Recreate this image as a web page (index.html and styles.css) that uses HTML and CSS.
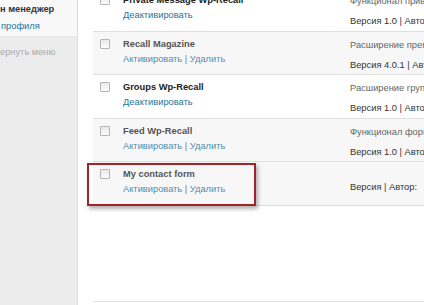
FILE: index.html
```html
<!DOCTYPE html>
<html lang="ru">
<head>
<meta charset="utf-8">
<link rel="stylesheet" href="styles.css">
</head>
<body>
<div class="page">
  <aside class="sidebar">
    <div class="side-top">
      <div class="side-title">н менеджер</div>
      <a class="side-link">профиля</a>
    </div>
    <div class="side-bottom">
      <div class="side-collapse">ернуть меню</div>
    </div>
  </aside>
  <main class="main">
    <div class="plugins">
      <div class="row active">
        <div class="cb-cell"><span class="cb"></span></div>
        <div class="name-cell">
          <div class="title">Private Message Wp-Recall</div>
          <div class="actions"><a>Деактивировать</a></div>
        </div>
        <div class="desc-cell">
          <div class="desc">Функционал приватных сообщений</div>
          <div class="ver">Версия 1.0 | Автор</div>
        </div>
      </div>
      <div class="row inactive">
        <div class="cb-cell"><span class="cb"></span></div>
        <div class="name-cell">
          <div class="title">Recall Magazine</div>
          <div class="actions"><a>Активировать</a> <span class="sep">|</span> <a>Удалить</a></div>
        </div>
        <div class="desc-cell">
          <div class="desc">Расширение премиум</div>
          <div class="ver">Версия 4.0.1 | Автор</div>
        </div>
      </div>
      <div class="row active">
        <div class="cb-cell"><span class="cb"></span></div>
        <div class="name-cell">
          <div class="title">Groups Wp-Recall</div>
          <div class="actions"><a>Деактивировать</a></div>
        </div>
        <div class="desc-cell">
          <div class="desc">Расширение групп</div>
          <div class="ver">Версия 1.0 | Автор</div>
        </div>
      </div>
      <div class="row inactive">
        <div class="cb-cell"><span class="cb"></span></div>
        <div class="name-cell">
          <div class="title">Feed Wp-Recall</div>
          <div class="actions"><a>Активировать</a> <span class="sep">|</span> <a>Удалить</a></div>
        </div>
        <div class="desc-cell">
          <div class="desc">Функционал формирования</div>
          <div class="ver">Версия 1.0 | Автор</div>
        </div>
      </div>
      <div class="row inactive highlighted">
        <div class="cb-cell"><span class="cb"></span></div>
        <div class="name-cell">
          <div class="title">My contact form</div>
          <div class="actions"><a>Активировать</a> <span class="sep">|</span> <a>Удалить</a></div>
        </div>
        <div class="desc-cell no-desc">
          <div class="ver">Версия | Автор:</div>
        </div>
        <div class="mark"></div>
      </div>
    </div>
    <div class="footer-line"></div>
  </main>
</div>
</body>
</html>
```

FILE: styles.css
```css
* { box-sizing: border-box; }
html, body {
  margin: 0;
  padding: 0;
  background: #fff;
  overflow: hidden;
}
body {
  font-family: "Liberation Sans", Arial, sans-serif;
  font-size: 9.3px;
  color: #333;
  width: 424px;
  height: 305px;
}
.page {
  display: flex;
  height: 305px;
}
.sidebar {
  width: 78px;
  flex: none;
  display: flex;
  flex-direction: column;
  border-right: 1px solid #dcdcdc;
  background: #ececec;
}
.side-top {
  height: 37px;
  background: #f8f8f8;
  border-bottom: 1px solid #e4e4e4;
  padding-top: 3px;
}
.side-title {
  font-weight: bold;
  color: #333;
  line-height: 13px;
  white-space: nowrap;
}
.side-link {
  display: block;
  color: #21759b;
  line-height: 13px;
  margin-top: 4px;
  padding-left: 1px;
  white-space: nowrap;
}
.side-bottom {
  flex: 1;
  padding-top: 9px;
}
.side-collapse {
  color: #aaa;
  line-height: 13px;
  white-space: nowrap;
}
.main {
  flex: 1;
  min-width: 0;
  padding-left: 15px;
  display: flex;
  flex-direction: column;
}
.plugins {
  margin-top: -12px;
}
.row {
  position: relative;
  display: grid;
  grid-template-columns: 30px 227px 1fr;
  height: 43.5px;
  border-bottom: 1px solid #dfdfdf;
  white-space: nowrap;
  overflow: visible;
}
.row.active { background: #fff; }
.row.inactive { background: #f7f7f7; }
.cb-cell {
  padding: 7px 0 0 7px;
}
.cb {
  display: block;
  width: 10px;
  height: 10px;
  border: 1px solid #b4b4b4;
  background: linear-gradient(#eaeaea, #fbfbfb);
  border-radius: 1px;
}
.name-cell {
  padding-top: 5px;
  line-height: 15px;
  overflow: hidden;
}
.title {
  font-weight: bold;
}
.active .title { color: #222; }
.inactive .title { color: #555; }
.actions a { color: #21759b; }
.inactive .actions a { color: #4f8eaf; }
.sep { color: #777; }
.desc-cell {
  padding-top: 3px;
  line-height: 20px;
  overflow: hidden;
}
.desc { color: #666; }
.ver { color: #333; }
.desc-cell.no-desc { padding-top: 15px; }
.mark {
  position: absolute;
  left: -6px;
  top: 1px;
  width: 169px;
  height: 43px;
  border: 2px solid #a3232a;
  box-shadow: 2px 3px 4px rgba(0, 0, 0, 0.3);
  pointer-events: none;
}
.footer-line {
  margin-top: 95px;
  border-top: 1px solid #dedede;
}
```
